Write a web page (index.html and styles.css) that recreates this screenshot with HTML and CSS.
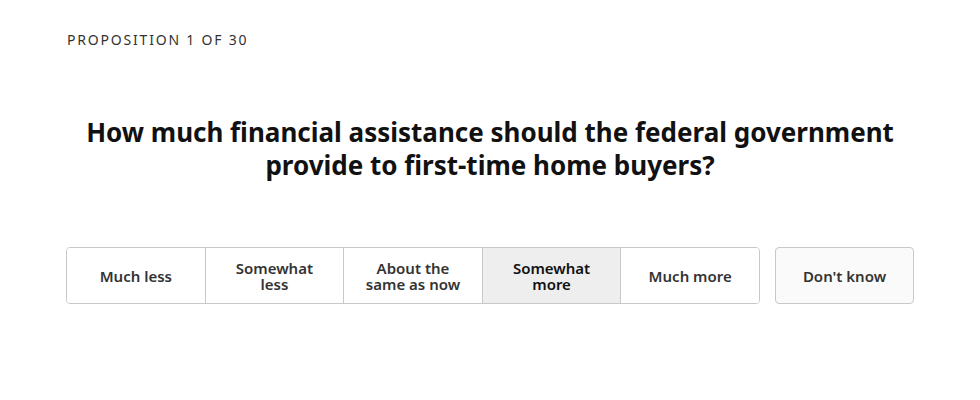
FILE: index.html
```html
<!DOCTYPE html>
<html lang="en">
<head>
<meta charset="utf-8">
<title>Proposition</title>
<link rel="stylesheet" href="styles.css">
</head>
<body>
<main class="page">
  <div class="eyebrow">PROPOSITION 1 OF 30</div>
  <h1 class="question">How much financial assistance should the federal government provide to first-time home buyers?</h1>
  <div class="answers">
    <div class="scale">
      <button class="opt">Much less</button>
      <button class="opt">Somewhat<br>less</button>
      <button class="opt">About the<br>same as now</button>
      <button class="opt selected">Somewhat<br>more</button>
      <button class="opt">Much more</button>
    </div>
    <button class="dk">Don't know</button>
  </div>
</main>
</body>
</html>
```
FILE: styles.css
```css
html, body {
  margin: 0;
  padding: 0;
  background: #fff;
}
body {
  font-family: "Noto Sans", "Open Sans", "DejaVu Sans", sans-serif;
  color: #222;
}
.page {
  width: 848px;
  margin: 0 0 0 66px;
  padding-top: 30px;
}
.eyebrow {
  font-size: 14px;
  letter-spacing: 1.8px;
  color: #333;
  line-height: 19px;
  padding-left: 1px;
}
.question {
  margin: 67px 0 0;
  font-size: 26px;
  font-weight: 700;
  line-height: 33px;
  text-align: center;
  color: #111;
}
.answers {
  display: flex;
  gap: 15px;
  margin-top: 65px;
}
.scale {
  display: flex;
  width: 694px;
  box-sizing: border-box;
  border: 1px solid #c8c8c8;
  border-radius: 4px;
  overflow: hidden;
}
.opt, .dk {
  font-family: inherit;
  font-size: 15px;
  font-weight: 600;
  line-height: 16px;
  color: #333;
  background: #fff;
  border: none;
  margin: 0;
  padding: 0;
  height: 55px;
  cursor: pointer;
}
.opt {
  flex: 1 1 0;
  min-width: 0;
  border-left: 1px solid #c8c8c8;
}
.opt:first-child {
  border-left: none;
}
.opt.selected {
  background: #eeeeee;
  color: #111;
}
.dk {
  width: 139px;
  height: 57px;
  border: 1px solid #c8c8c8;
  border-radius: 4px;
  background: #fafafa;
}
```
